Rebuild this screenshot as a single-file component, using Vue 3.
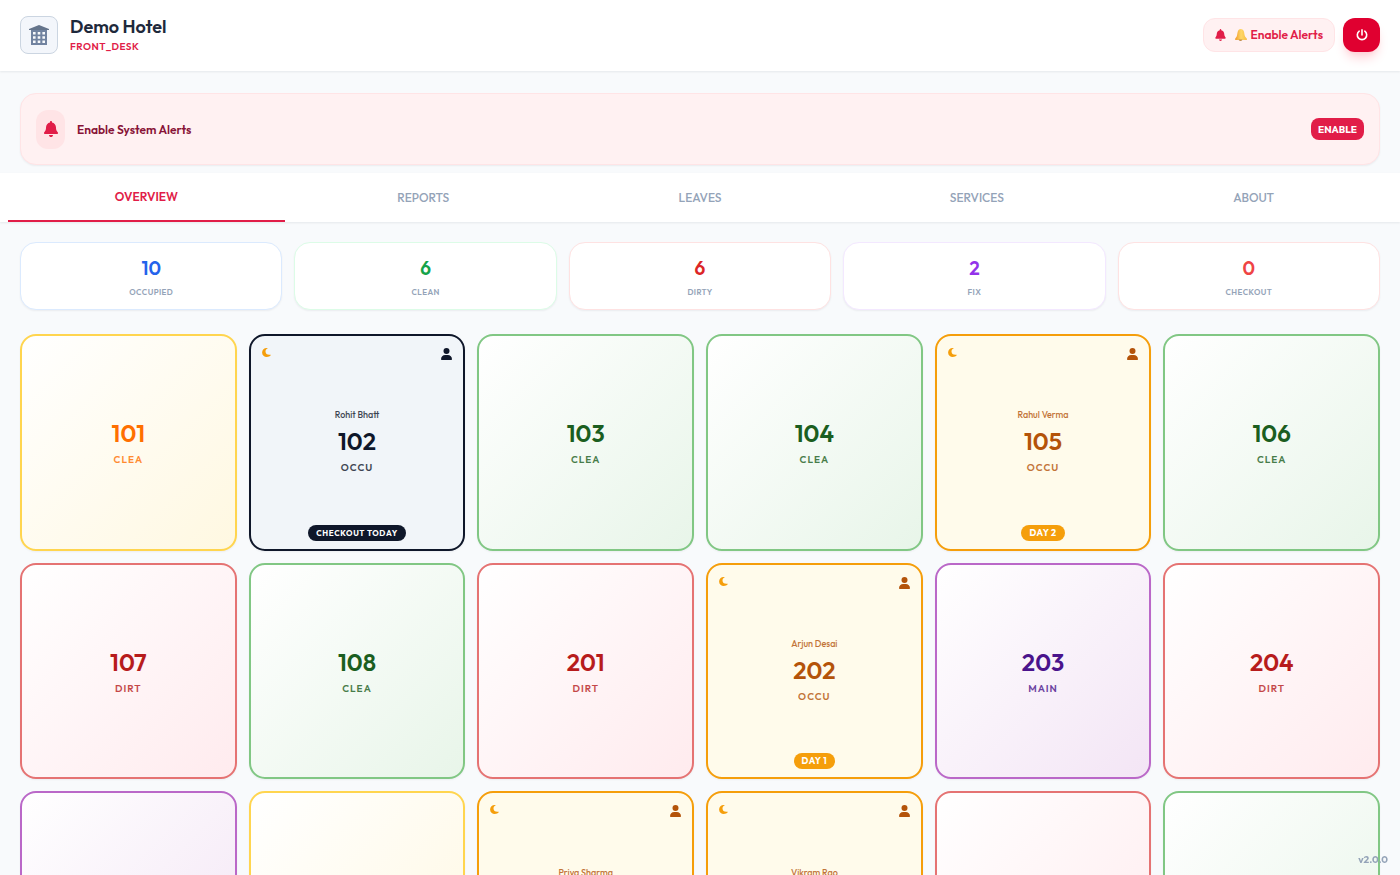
<script setup>
const tabs = ['Overview', 'Reports', 'Leaves', 'Services', 'About']

const stats = [
  { value: 10, label: 'Occupied', tone: 'blue' },
  { value: 6, label: 'Clean', tone: 'green' },
  { value: 6, label: 'Dirty', tone: 'red' },
  { value: 2, label: 'Fix', tone: 'purple' },
  { value: 0, label: 'Checkout', tone: 'rose' },
]

const rooms = [
  { number: 101, status: 'clea', tone: 'cleaning' },
  { number: 102, status: 'occu', tone: 'checkout', guest: 'Rohit Bhatt', badge: 'Checkout today' },
  { number: 103, status: 'clea', tone: 'clean' },
  { number: 104, status: 'clea', tone: 'clean' },
  { number: 105, status: 'occu', tone: 'occupied', guest: 'Rahul Verma', badge: 'Day 2' },
  { number: 106, status: 'clea', tone: 'clean' },
  { number: 107, status: 'dirt', tone: 'dirty' },
  { number: 108, status: 'clea', tone: 'clean' },
  { number: 201, status: 'dirt', tone: 'dirty' },
  { number: 202, status: 'occu', tone: 'occupied', guest: 'Arjun Desai', badge: 'Day 1' },
  { number: 203, status: 'main', tone: 'maintenance' },
  { number: 204, status: 'dirt', tone: 'dirty' },
  { number: 205, status: 'main', tone: 'maintenance' },
  { number: 206, status: 'clea', tone: 'cleaning' },
  { number: 207, status: 'occu', tone: 'occupied', guest: 'Priya Sharma', badge: 'Day 1' },
  { number: 208, status: 'occu', tone: 'occupied', guest: 'Vikram Rao', badge: 'Day 1' },
  { number: 301, status: 'dirt', tone: 'dirty' },
  { number: 302, status: 'clea', tone: 'clean' },
]
</script>

<template>
  <div class="page">
    <header class="topbar">
      <div class="brand">
        <div class="logo">
          <svg viewBox="0 0 20 20" width="20" height="20" aria-hidden="true">
            <path fill="#7183a0" d="M2 4h16v16H2z" />
            <path fill="#64748b" d="M10 0 20 4v1H0V4z" />
            <path
              fill="#f8fafc"
              d="M4 7h2.600v2.600H4zM8.700 7h2.600v2.600H8.700zM13.400 7H16v2.600h-2.600zM4 11.200h2.600v2.600H4zM8.700 11.200h2.600v2.600H8.700zM13.400 11.200H16v2.600h-2.600zM4 15.400h2.600V18H4zM8.700 15.400h2.600V18H8.700zM13.400 15.400H16V18h-2.600z"
            />
          </svg>
        </div>
        <div>
          <h1>Demo Hotel</h1>
          <p class="role">FRONT_DESK</p>
        </div>
      </div>
      <div class="actions">
        <button class="alerts" type="button">
          <svg class="bell" viewBox="0 0 448 512" width="11" height="12" aria-hidden="true">
            <path d="M224 0c-18 0-32 14-32 32v19C119 66 64 130 64 208v19c0 47-17 92-48 127l-8 9c-8 9-10 23-5 34s16 19 29 19h384c13 0 24-7 29-19s3-25-5-34l-8-9c-31-35-48-80-48-127v-19c0-78-55-142-128-157V32c0-18-14-32-32-32zm45 493c12-12 19-28 19-45H160c0 17 7 33 19 45s28 19 45 19 33-7 45-19z" />
          </svg>
          <span class="alerts-text">
            <svg viewBox="0 0 12 12" width="12" height="12" aria-hidden="true">
              <defs>
                <linearGradient id="gold" x1="0" x2="1">
                  <stop offset="0" stop-color="#f0992b" />
                  <stop offset=".5" stop-color="#ffd766" />
                  <stop offset="1" stop-color="#f8bd45" />
                </linearGradient>
              </defs>
              <path fill="url(#gold)" d="M5.700 0C7.200 0 8.700 1 9.100 3.200c.4 2.600.6 4.200 2 5.600.9.800 1.100 1.800.6 2.200H.5c-.6-.4-.5-1.400.3-2.200C2.200 7.500 2 5.500 2.600 3.200 3.100 1.200 4.300 0 5.700 0z" />
              <path fill="#c08a45" d="M3.600 10.600h3.800c0 .9-.8 1.400-1.900 1.400s-1.900-.5-1.900-1.400z" />
            </svg>
            Enable Alerts
          </span>
        </button>
        <button class="power" type="button" aria-label="Log out">
          <svg viewBox="0 0 12 12" width="12" height="12" fill="none" stroke="#fff" stroke-width="1.600" stroke-linecap="round" aria-hidden="true">
            <path d="M6 .9v5M3.200 2.200a4.700 4.700 0 1 0 5.600 0" />
          </svg>
        </button>
      </div>
    </header>

    <section class="banner">
      <span class="banner-icon">
        <svg class="bell" viewBox="0 0 448 512" width="14" height="16" aria-hidden="true">
          <path d="M224 0c-18 0-32 14-32 32v19C119 66 64 130 64 208v19c0 47-17 92-48 127l-8 9c-8 9-10 23-5 34s16 19 29 19h384c13 0 24-7 29-19s3-25-5-34l-8-9c-31-35-48-80-48-127v-19c0-78-55-142-128-157V32c0-18-14-32-32-32zm45 493c12-12 19-28 19-45H160c0 17 7 33 19 45s28 19 45 19 33-7 45-19z" />
        </svg>
      </span>
      <h2>Enable System Alerts</h2>
      <button class="enable" type="button">ENABLE</button>
    </section>

    <nav class="tabs">
      <button v-for="(tab, i) in tabs" :key="tab" type="button" class="tab" :class="{ active: i === 0 }">
        {{ tab }}
      </button>
    </nav>

    <main>
      <section class="stats">
        <button v-for="s in stats" :key="s.label" type="button" class="stat" :class="s.tone">
          <span class="stat-value">{{ s.value }}</span>
          <span class="stat-label">{{ s.label }}</span>
        </button>
      </section>

      <section class="rooms">
        <button v-for="r in rooms" :key="r.number" type="button" class="room" :class="r.tone">
          <template v-if="r.guest">
            <svg class="moon" viewBox="0 0 9 9" width="9" height="9" aria-hidden="true">
              <path d="M5.400.1C2.500-.3.100 1.700.100 4.500S2.300 9 4.800 9c1.600 0 3.100-.6 3.900-1.700.2-.3 0-.5-.3-.5C5.300 7.200 3.500 5.700 3.500 3.500c0-1.200.7-2.300 1.900-2.900.3-.2.300-.5 0-.5z" />
            </svg>
            <svg class="person" viewBox="0 0 11 12" width="11" height="12" aria-hidden="true">
              <circle cx="5.500" cy="3" r="3" />
              <path d="M4.200 7h2.600C9.200 7 11 8.900 11 11.200c0 .5-.3.800-.8.800H.8c-.5 0-.8-.3-.8-.8C0 8.900 1.800 7 4.200 7z" />
            </svg>
            <span class="guest">{{ r.guest }}</span>
          </template>
          <span class="number">{{ r.number }}</span>
          <span class="status">{{ r.status }}</span>
          <span v-if="r.badge" class="badge">{{ r.badge }}</span>
        </button>
      </section>
    </main>

    <span class="version">v2.0.0</span>
  </div>
</template>

<style>
body {
  background: #f8fafc;
}
</style>

<style scoped>
* {
  box-sizing: border-box;
}
.page {
  display: flex;
  flex-direction: column;
  height: 100vh;
  background: #f8fafc;
  color: #1e293b;
  font-family: Outfit, Lato, "Open Sans", sans-serif;
}
button {
  margin: 0;
  padding: 0;
  border: 0;
  background: none;
  font: inherit;
  cursor: pointer;
}
h1,
h2,
p {
  margin: 0;
}
.topbar {
  display: flex;
  flex: none;
  align-items: center;
  justify-content: space-between;
  height: 71px;
  padding: 0 20px 2px;
  background: #fff;
  box-shadow: 0 1px 2px rgba(15, 23, 42, 0.08);
}
.brand {
  display: flex;
  align-items: center;
  gap: 12px;
}
.logo {
  display: grid;
  place-items: center;
  width: 38px;
  height: 38px;
  border: 1px solid #cbd5e1;
  border-radius: 8px;
  background: #f3f6fb;
}
h1 {
  font-size: 18px;
  line-height: 20px;
  font-weight: 600;
}
.role {
  margin-top: 3px;
  font-size: 10px;
  line-height: 13px;
  font-weight: 600;
  letter-spacing: 0.5px;
  color: #e11d48;
}
.actions {
  display: flex;
  align-items: center;
  gap: 8px;
}
.alerts {
  display: flex;
  align-items: center;
  gap: 9px;
  height: 34px;
  padding: 0 11px;
  border: 1px solid #ffe4e6;
  border-radius: 12px;
  background: #fff1f2;
  color: #e11d48;
  font-size: 12px;
  font-weight: 600;
}
.alerts-text {
  display: flex;
  align-items: center;
  gap: 4px;
}
.bell {
  fill: #e11d48;
}
.power {
  display: grid;
  place-items: center;
  width: 37px;
  height: 34px;
  border-radius: 12px;
  background: #e00030;
  box-shadow: 0 8px 12px -3px #fecdd3, 0 3px 5px -3px #fecdd3;
}
.banner {
  display: flex;
  flex: none;
  align-items: center;
  gap: 12px;
  height: 72px;
  margin: 22px 20px 8px;
  padding: 0 15px;
  border: 1px solid #ffe4e6;
  border-radius: 16px;
  background: #fff1f2;
  box-shadow: 0 1px 2px rgba(15, 23, 42, 0.06);
}
.banner-icon {
  display: grid;
  place-items: center;
  width: 29px;
  height: 39px;
  border-radius: 12px;
  background: #ffe4e6;
}
h2 {
  font-size: 12px;
  font-weight: 600;
  color: #881337;
}
.enable {
  height: 22px;
  margin-left: auto;
  padding: 0 7px;
  border-radius: 8px;
  background: #e11d48;
  color: #fff;
  font-size: 10px;
  font-weight: 700;
}
.tabs {
  position: relative;
  display: flex;
  flex: none;
  height: 49px;
  padding: 0 8px;
  background: #fff;
  box-shadow: 0 1px 2px rgba(15, 23, 42, 0.08);
}
.tab {
  flex: 1;
  color: #94a3b8;
  font-size: 12px;
  font-weight: 500;
  text-transform: uppercase;
}
.tab.active {
  border-bottom: 2px solid #e11d48;
  color: #e11d48;
  font-weight: 600;
}
main {
  flex: 1;
  min-height: 0;
  padding: 20px;
  overflow-y: auto;
  scrollbar-width: none;
}
.stats {
  display: grid;
  grid-template-columns: repeat(5, 1fr);
  gap: 12px;
}
.stat {
  display: flex;
  flex-direction: column;
  align-items: center;
  height: 68px;
  padding-top: 13px;
  border: 1px solid;
  border-radius: 16px;
  background: #fff;
  box-shadow: 0 1px 2px rgba(15, 23, 42, 0.06);
}
.stat-value {
  font-size: 19px;
  line-height: 24px;
  font-weight: 600;
}
.stat-label {
  margin-top: 6px;
  color: #94a3b8;
  font-size: 8px;
  line-height: 12px;
  font-weight: 600;
  letter-spacing: 0.4px;
  text-transform: uppercase;
}
.blue { border-color: #dbeafe; color: #2563eb; }
.green { border-color: #dcfce7; color: #16a34a; }
.red { border-color: #fee2e2; color: #dc2626; }
.purple { border-color: #f3e8ff; color: #9333ea; }
.rose { border-color: #fee2e2; color: #ef4444; }
.rooms {
  display: grid;
  grid-template-columns: repeat(6, 1fr);
  gap: 12px;
  margin-top: 24px;
}
.room {
  position: relative;
  display: flex;
  flex-direction: column;
  align-items: center;
  justify-content: center;
  aspect-ratio: 1;
  border: 2px solid;
  border-radius: 16px;
  box-shadow: 0 1px 2px rgba(15, 23, 42, 0.05);
}
.cleaning { border-color: #ffd54f; background: linear-gradient(135deg, #fff, #fff8e1); color: #ff6f00; }
.clean { border-color: #81c784; background: linear-gradient(135deg, #fff, #e8f5e9); color: #1b5e20; }
.dirty { border-color: #e57373; background: linear-gradient(135deg, #fff, #ffebee); color: #b71c1c; }
.maintenance { border-color: #ba68c8; background: linear-gradient(135deg, #fff, #f3e5f5); color: #4a148c; }
.occupied { border-color: #f59e0b; background: #fffbeb; color: #b45309; }
.checkout { border-color: #0f172a; background: #f1f5f9; color: #0f172a; }
.guest {
  margin-bottom: 5px;
  font-size: 9px;
  line-height: 12px;
  font-weight: 500;
  opacity: 0.8;
}
.number {
  font-size: 24px;
  line-height: 30px;
  font-weight: 600;
}
.status {
  margin-top: 5px;
  font-size: 10px;
  line-height: 14px;
  font-weight: 600;
  letter-spacing: 1px;
  text-transform: uppercase;
  opacity: 0.8;
}
.moon {
  position: absolute;
  top: 12px;
  left: 11px;
  fill: #f59e0b;
}
.person {
  position: absolute;
  top: 12px;
  right: 11px;
  fill: currentColor;
}
.badge {
  position: absolute;
  bottom: 8px;
  padding: 0 8px;
  border-radius: 8px;
  background: #f59e0b;
  color: #fff;
  font-size: 9px;
  line-height: 16px;
  font-weight: 700;
  letter-spacing: 0.4px;
  text-transform: uppercase;
  white-space: nowrap;
}
.checkout .badge {
  background: #0f172a;
  font-size: 8px;
  letter-spacing: 0.6px;
}
.version {
  position: fixed;
  right: 12px;
  bottom: 8px;
  color: #94a3b8;
  font-size: 10px;
  line-height: 14px;
  font-weight: 700;
}
</style>
